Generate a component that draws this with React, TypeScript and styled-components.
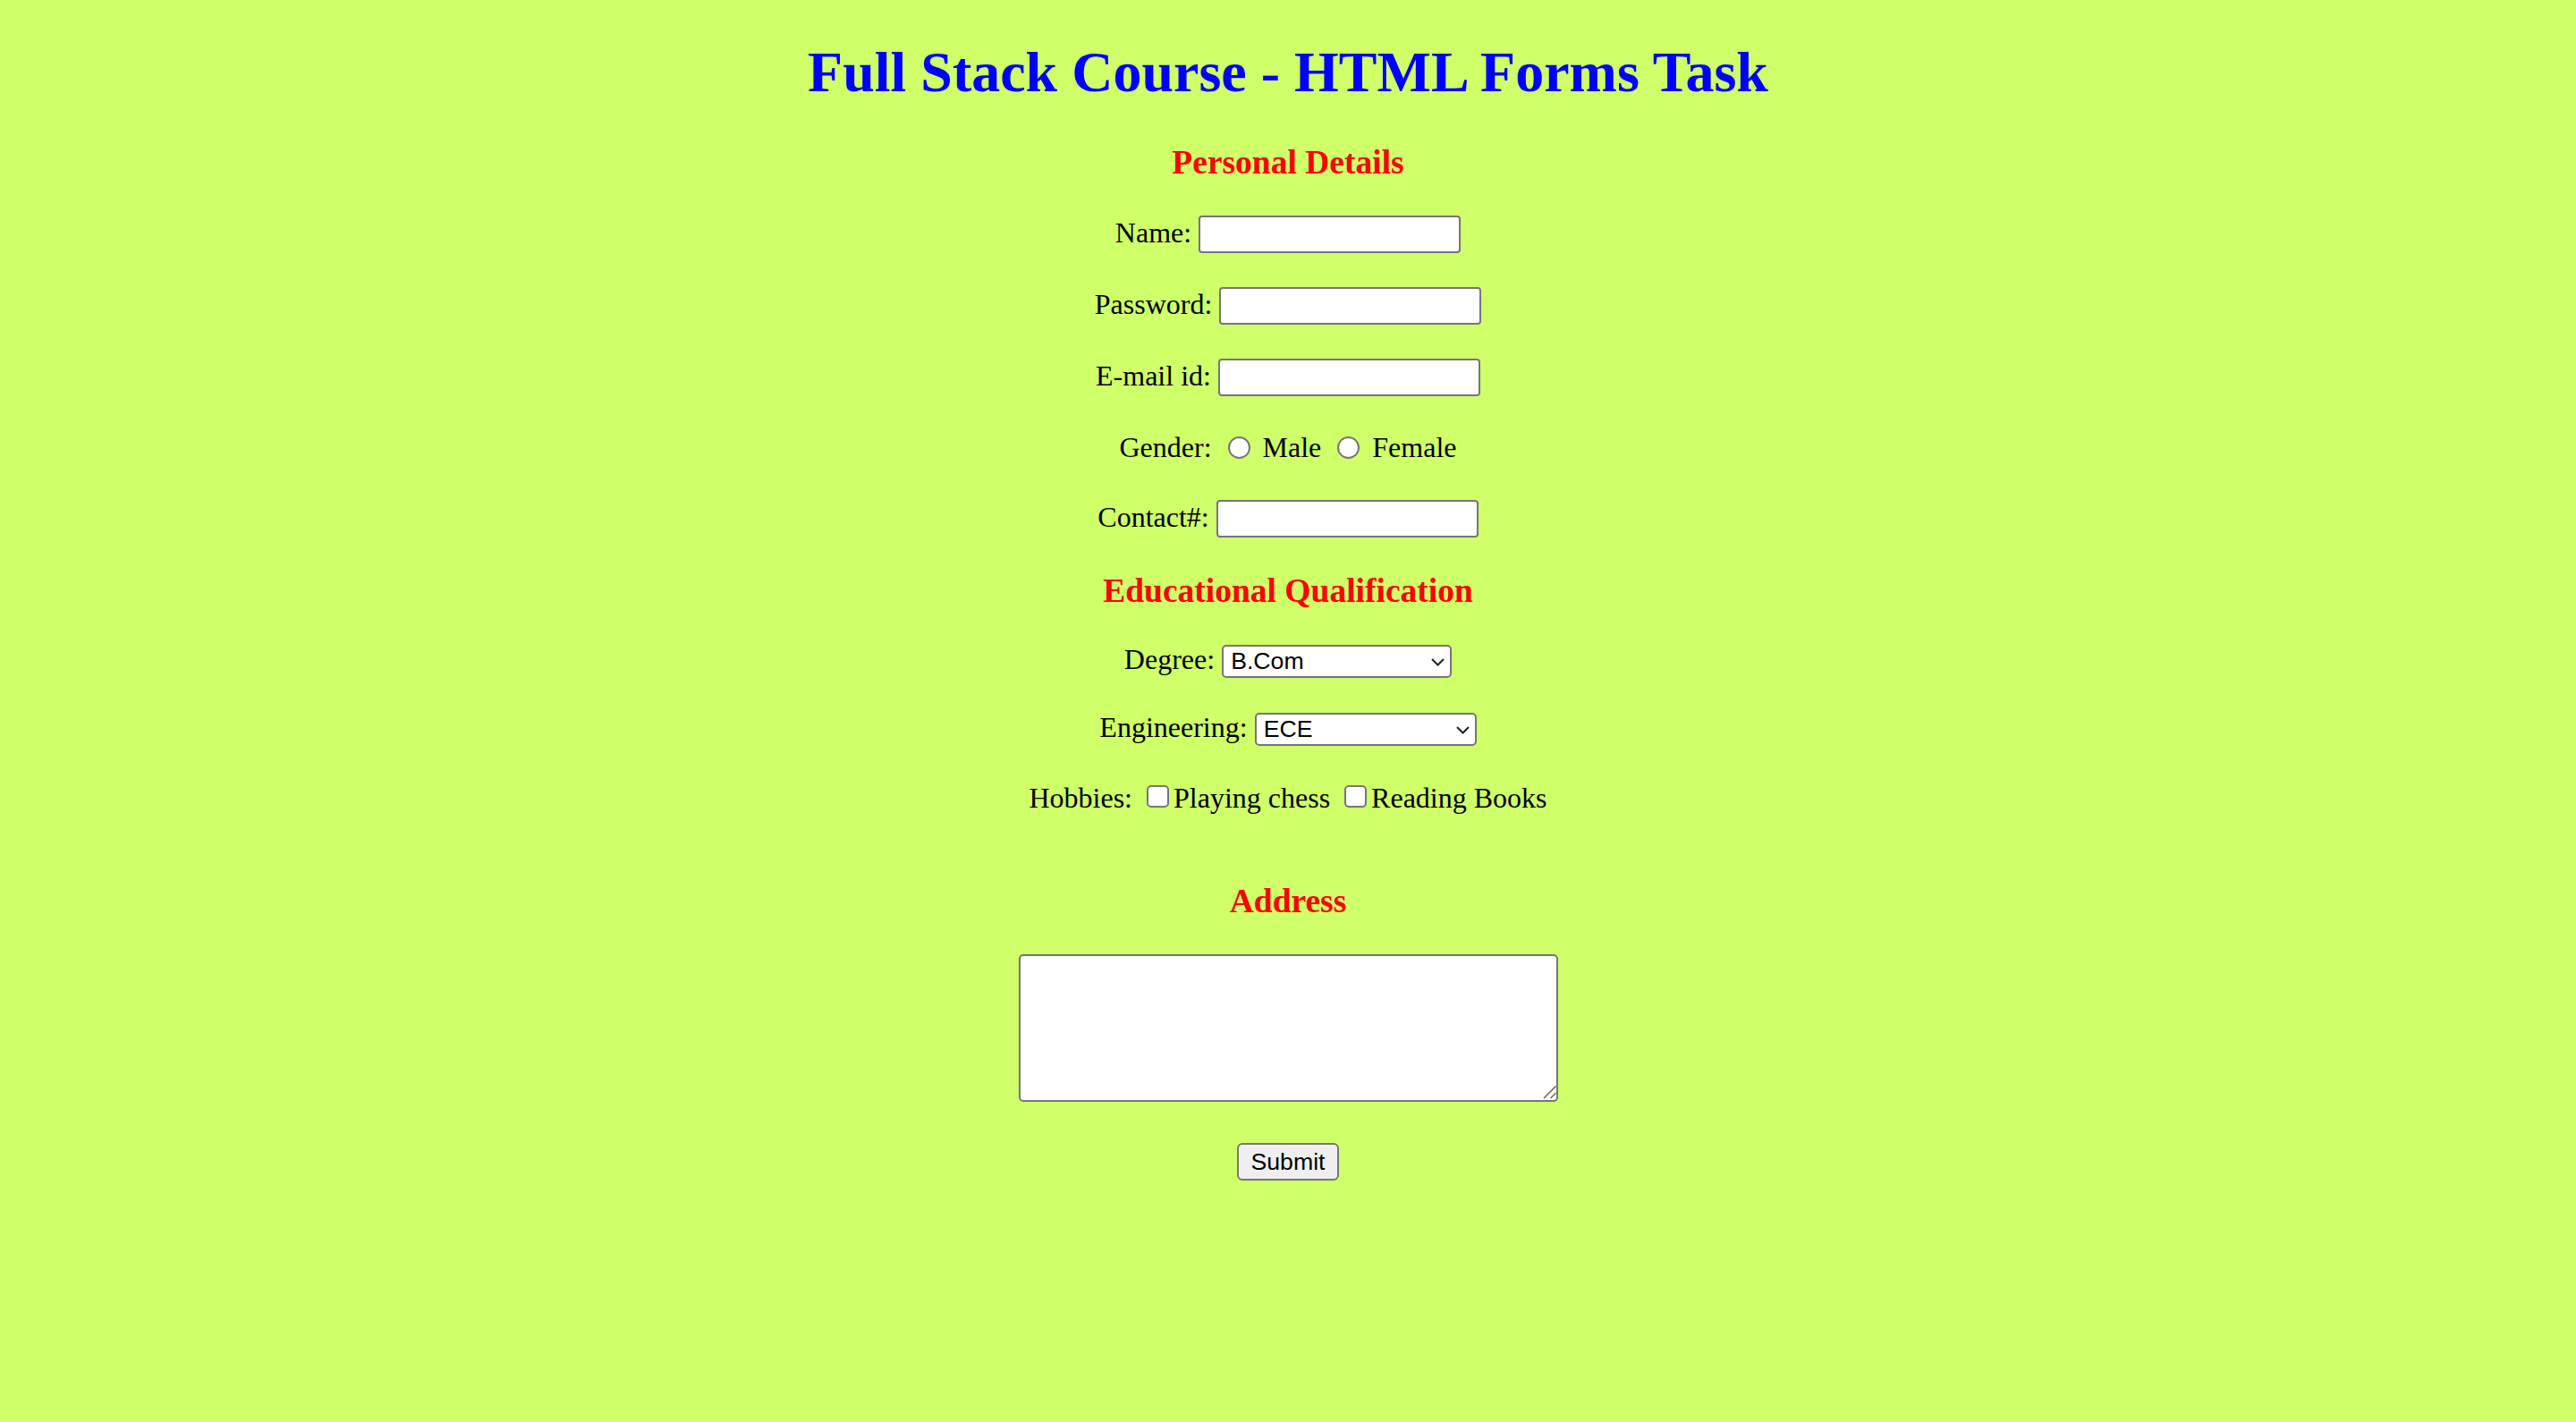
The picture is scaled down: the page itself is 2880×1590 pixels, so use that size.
import React from "react";
import styled, { createGlobalStyle } from "styled-components";

const GlobalStyle = createGlobalStyle`
  html, body {
    margin: 0;
    padding: 0;
    background: #cfff69;
  }
  body {
    font-family: "Liberation Serif", "Times New Roman", serif;
    font-size: 32px;
    color: #000;
  }
`;

const Page = styled.div`
  display: flex;
  flex-direction: column;
  align-items: center;
  box-sizing: border-box;
  min-height: 100vh;
  padding: 0 16px 40px;
`;

const Title = styled.h1`
  margin: 44px 0 0;
  font-size: 64px;
  line-height: 74px;
  font-weight: bold;
  color: #0000ff;
  white-space: nowrap;
`;

const SectionHeading = styled.h3<{ $top: number }>`
  margin: ${(p) => p.$top}px 0 0;
  font-size: 37.5px;
  line-height: 43px;
  font-weight: bold;
  color: #ff0000;
  white-space: nowrap;
`;

const Form = styled.form`
  display: flex;
  flex-direction: column;
  align-items: center;
`;

const Row = styled.div<{ $top: number; $align?: "baseline" | "center" }>`
  display: flex;
  justify-content: center;
  align-items: ${(p) => p.$align ?? "baseline"};
  margin-top: ${(p) => p.$top}px;
`;

const Label = styled.label<{ $mr?: number }>`
  line-height: 36px;
  white-space: nowrap;
  margin-right: ${(p) => p.$mr ?? 0}px;
`;

const TextInput = styled.input`
  box-sizing: border-box;
  width: 293px;
  height: 42px;
  margin: 0;
  padding: 0 4px;
  border: 2px solid #767676;
  border-radius: 4px;
  background: #fff;
  font-family: "Liberation Sans", Arial, sans-serif;
  font-size: 26.67px;
  color: #000;
  outline: none;
`;

const Radio = styled.input`
  appearance: none;
  box-sizing: border-box;
  width: 25px;
  height: 25px;
  margin: 0 14px 0 18px;
  border: 2px solid #767676;
  border-radius: 50%;
  background: #fff;
  flex: none;
`;

const Checkbox = styled.input`
  appearance: none;
  box-sizing: border-box;
  width: 25px;
  height: 25px;
  margin: 0 5px 4px 16px;
  border: 2px solid #767676;
  border-radius: 5px;
  background: #fff;
  flex: none;
`;

const SelectWrap = styled.span`
  position: relative;
  display: inline-flex;
`;

const Select = styled.select<{ $w: number }>`
  appearance: none;
  box-sizing: border-box;
  width: ${(p) => p.$w}px;
  height: 37px;
  margin: 0;
  padding: 0 36px 0 8px;
  border: 2px solid #767676;
  border-radius: 5px;
  background: #fff;
  font-family: "Liberation Sans", Arial, sans-serif;
  font-size: 26.67px;
  line-height: 33px;
  color: #000;
  outline: none;
`;

const Chevron = styled.svg`
  position: absolute;
  right: 8px;
  top: 50%;
  width: 15px;
  height: 9px;
  margin-top: -4px;
  pointer-events: none;
`;

const AreaWrap = styled.div<{ $top: number }>`
  position: relative;
  margin-top: ${(p) => p.$top}px;
`;

const TextArea = styled.textarea`
  display: block;
  box-sizing: border-box;
  width: 603px;
  height: 165px;
  margin: 0;
  padding: 4px;
  border: 2px solid #767676;
  border-radius: 5px;
  background: #fff;
  resize: none;
  font-family: "Liberation Mono", monospace;
  font-size: 26.67px;
  outline: none;
`;

const ResizeHandle = styled.svg`
  position: absolute;
  right: 0;
  bottom: 0;
  width: 18px;
  height: 18px;
  pointer-events: none;
`;

const SubmitButton = styled.button<{ $top: number }>`
  box-sizing: border-box;
  height: 42px;
  margin-top: ${(p) => p.$top}px;
  padding: 0 14px;
  border: 2px solid #767676;
  border-radius: 6px;
  background: #efefef;
  font-family: "Liberation Sans", Arial, sans-serif;
  font-size: 26.67px;
  color: #000;
`;

const ChevronIcon = () => (
  <Chevron viewBox="0 0 15 9">
    <path d="M1 1 L7.5 7.5 L14 1" fill="none" stroke="#222" strokeWidth="2" />
  </Chevron>
);

export default function App() {
  return (
    <>
      <GlobalStyle />
      <Page>
        <Title>Full Stack Course - HTML Forms Task</Title>
        <Form onSubmit={(e) => e.preventDefault()}>
          <SectionHeading $top={42}>Personal Details</SectionHeading>

          <Row $top={38}>
            <Label htmlFor="name" $mr={8}>Name:</Label>
            <TextInput id="name" type="text" />
          </Row>
          <Row $top={38}>
            <Label htmlFor="password" $mr={8}>Password:</Label>
            <TextInput id="password" type="password" />
          </Row>
          <Row $top={38}>
            <Label htmlFor="email" $mr={8}>E-mail id:</Label>
            <TextInput id="email" type="email" />
          </Row>
          <Row $top={39} $align="center">
            <Label>Gender:</Label>
            <Radio id="male" type="radio" name="gender" />
            <Label htmlFor="male">Male</Label>
            <Radio id="female" type="radio" name="gender" />
            <Label htmlFor="female">Female</Label>
          </Row>
          <Row $top={41}>
            <Label htmlFor="contact" $mr={8}>Contact#:</Label>
            <TextInput id="contact" type="tel" />
          </Row>

          <SectionHeading $top={38}>Educational Qualification</SectionHeading>

          <Row $top={37}>
            <Label htmlFor="degree" $mr={8}>Degree:</Label>
            <SelectWrap>
              <Select id="degree" $w={257} defaultValue="B.Com">
                <option>B.Com</option>
                <option>B.Sc</option>
                <option>B.Tech</option>
                <option>BA</option>
              </Select>
              <ChevronIcon />
            </SelectWrap>
          </Row>
          <Row $top={37}>
            <Label htmlFor="engineering" $mr={8}>Engineering:</Label>
            <SelectWrap>
              <Select id="engineering" $w={248} defaultValue="ECE">
                <option>ECE</option>
                <option>CSE</option>
                <option>EEE</option>
                <option>MECH</option>
              </Select>
              <ChevronIcon />
            </SelectWrap>
          </Row>
          <Row $top={40} $align="center">
            <Label>Hobbies:</Label>
            <Checkbox id="chess" type="checkbox" />
            <Label htmlFor="chess">Playing chess</Label>
            <Checkbox id="books" type="checkbox" />
            <Label htmlFor="books">Reading Books</Label>
          </Row>

          <SectionHeading $top={76}>Address</SectionHeading>

          <AreaWrap $top={38}>
            <TextArea />
            <ResizeHandle viewBox="0 0 18 18">
              <path d="M2 14 L15.5 0.5 M9.5 14 L15.5 8" stroke="#6b6b6b" strokeWidth="1.6" fill="none" />
            </ResizeHandle>
          </AreaWrap>

          <SubmitButton type="submit" $top={46}>Submit</SubmitButton>
        </Form>
      </Page>
    </>
  );
}
